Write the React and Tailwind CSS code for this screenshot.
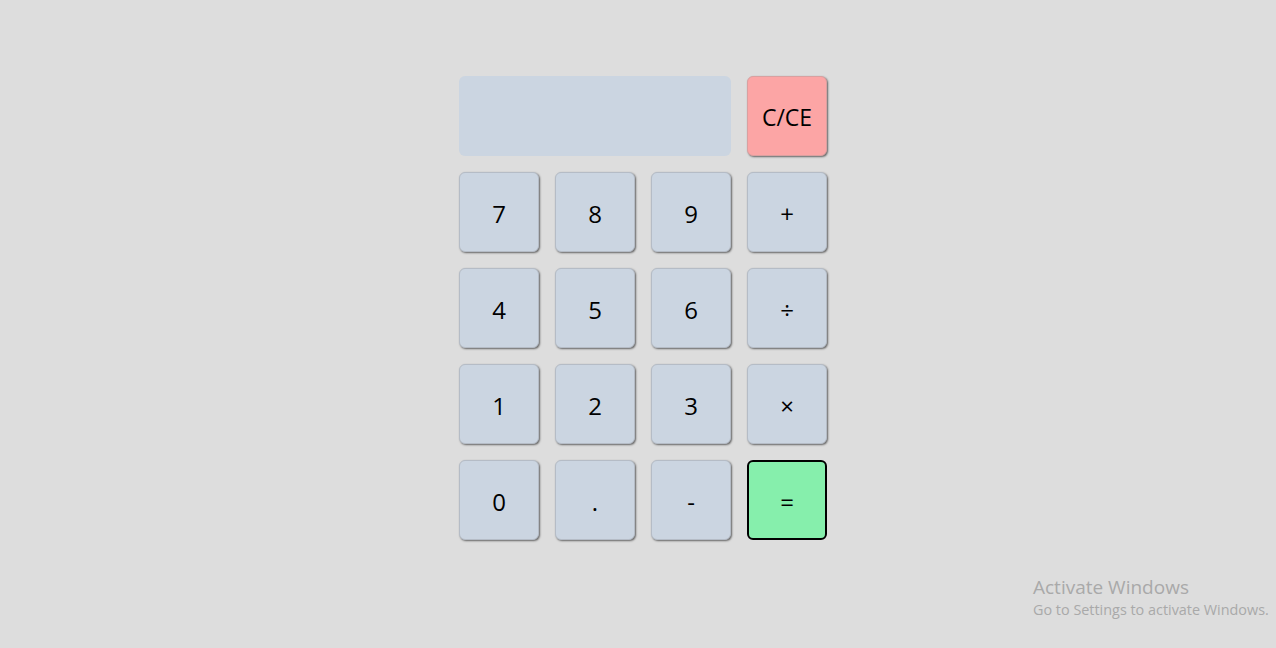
export default function App() {
  const btn =
    "w-20 h-20 rounded-md bg-[#cbd5e1] border border-[#b5bcc6] shadow-[1px_1px_2px_rgba(0,0,0,0.55)] flex items-center justify-center text-[24px] text-black pt-[3px]";
  const rows = [
    ["7", "8", "9", "+"],
    ["4", "5", "6", "÷"],
    ["1", "2", "3", "×"],
  ];
  return (
    <div
      className="w-[1276px] h-[648px] bg-[#dddddd] relative overflow-hidden"
      style={{ fontFamily: '"Open Sans", "Noto Sans", sans-serif' }}
    >
      <div className="pt-[76px] flex justify-center">
        <div className="grid grid-cols-[80px_80px_80px_80px] gap-4 ml-[10px]">
          <div className="col-span-3 h-20 rounded-md bg-[#cbd5e1]"></div>
          <button className="w-20 h-20 rounded-md bg-[#fca5a5] border border-[#d9a0a0] shadow-[1px_1px_2px_rgba(0,0,0,0.55)] flex items-center justify-center text-[23px] text-black pt-[3px]">
            C/CE
          </button>
          {rows.flat().map((k, i) => (
            <button key={i} className={btn}>
              {k}
            </button>
          ))}
          <button className={btn}>0</button>
          <button className={btn}>.</button>
          <button className={btn}>-</button>
          <button className="w-20 h-20 rounded-md bg-[#86efac] border-2 border-black flex items-center justify-center text-[24px] text-black pt-[3px]">
            =
          </button>
        </div>
      </div>
      <div className="absolute left-[1033px] top-[576px] text-[#a9a9a9] leading-tight">
        <div className="text-[19px]">Activate Windows</div>
        <div className="text-[14.4px] mt-[1px]">Go to Settings to activate Windows.</div>
      </div>
    </div>
  );
}
